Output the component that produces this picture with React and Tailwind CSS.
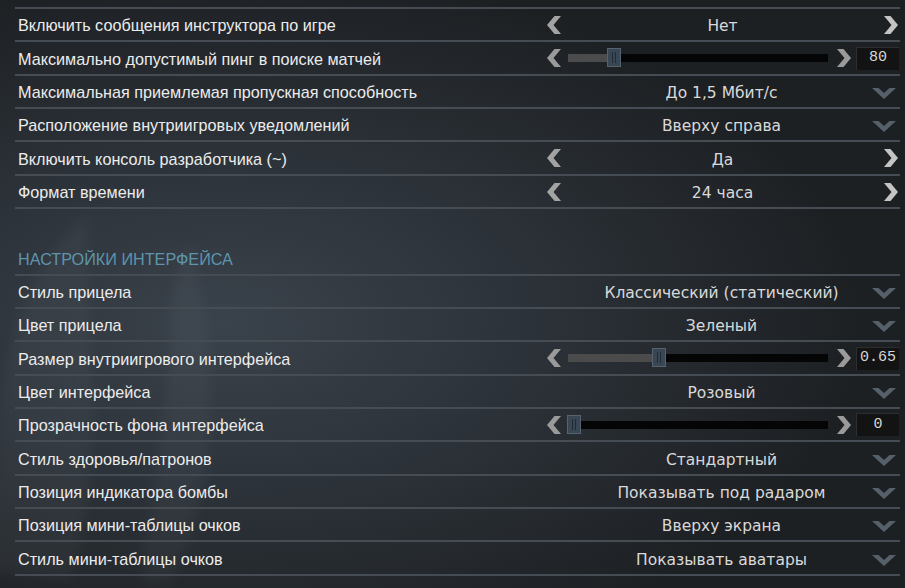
import React from "react";

const top = [
  { label: "Включить сообщения инструктора по игре", type: "select", value: "Нет" },
  { label: "Максимально допустимый пинг в поиске матчей", type: "slider", pct: 15.5, box: "80" },
  { label: "Максимальная приемлемая пропускная способность", type: "drop", value: "До 1,5 Мбит/с" },
  { label: "Расположение внутриигровых уведомлений", type: "drop", value: "Вверху справа" },
  { label: "Включить консоль разработчика (~)", type: "select", value: "Да" },
  { label: "Формат времени", type: "select", value: "24 часа" },
];

const hud = [
  { label: "Стиль прицела", type: "drop", value: "Классический (статический)" },
  { label: "Цвет прицела", type: "drop", value: "Зеленый" },
  { label: "Размер внутриигрового интерфейса", type: "slider", pct: 32.5, box: "0.65" },
  { label: "Цвет интерфейса", type: "drop", value: "Розовый" },
  { label: "Прозрачность фона интерфейса", type: "slider", pct: 0, box: "0" },
  { label: "Стиль здоровья/патронов", type: "drop", value: "Стандартный" },
  { label: "Позиция индикатора бомбы", type: "drop", value: "Показывать под радаром" },
  { label: "Позиция мини-таблицы очков", type: "drop", value: "Вверху экрана" },
  { label: "Стиль мини-таблицы очков", type: "drop", value: "Показывать аватары" },
];

function ArrowLeft({ color = "#a3a3a3" }) {
  return (
    <svg width="14" height="18" viewBox="0 0 14 18">
      <polygon points="14,0 6.5,9 14,18 7.5,18 0,9 7.5,0" fill={color} />
    </svg>
  );
}

function ArrowRight({ color = "#bdbdbd" }) {
  return (
    <svg width="14" height="18" viewBox="0 0 14 18">
      <polygon points="0,0 7.5,9 0,18 6.5,18 14,9 6.5,0" fill={color} />
    </svg>
  );
}

function ChevronDown() {
  return (
    <svg width="24" height="11" viewBox="0 0 24 11">
      <polygon points="0,0 6.5,0 12,5 17.5,0 24,0 12,11" fill="#56606b" />
    </svg>
  );
}

function Control({ row }) {
  if (row.type === "select") {
    return (
      <div className="flex items-center w-full pr-[2px]">
        <ArrowLeft />
        <span className="flex-1 text-center text-[15.5px] text-[#d9d9d9] pt-[5px] font-['DejaVu_Sans',sans-serif]">{row.value}</span>
        <ArrowRight color="#c4c4c4" />
      </div>
    );
  }
  if (row.type === "slider") {
    return (
      <div className="flex items-center w-full">
        <ArrowLeft color="#9a9a9a" />
        <div className="relative ml-[7px] w-[260px] h-[8px] bg-[#050505]">
          <div className="h-full bg-[#4b4b4b]" style={{ width: `${row.pct}%` }} />
          <div
            className="absolute top-[-6px] w-[14px] h-[19px] bg-[#394653] border border-[#56626e] flex justify-center gap-[2px] py-[3px]"
            style={{ left: `calc(${row.pct}% - 1px)` }}
          >
            <div className="w-px bg-[#222b33]" />
            <div className="w-px bg-[#222b33]" />
          </div>
        </div>
        <div className="ml-[9px]">
          <ArrowRight color="#9a9a9a" />
        </div>
        <div className="ml-[5px] w-[43px] h-[23px] bg-[#131313] border-t border-l border-[#2e2e2e] flex items-center justify-center text-[15px] text-[#d6d6d6] font-['Liberation_Mono',monospace]">
          {row.box}
        </div>
      </div>
    );
  }
  return (
    <div className="grid w-full items-center">
      <span className="[grid-area:1/1] text-center text-[15.5px] text-[#d9d9d9] pt-[5px] pr-[4px] font-['DejaVu_Sans',sans-serif]">{row.value}</span>
      <div className="[grid-area:1/1] justify-self-end pr-[4px] pt-[4px] flex">
        <ChevronDown />
      </div>
    </div>
  );
}

function Row({ row, idx }) {
  return (
    <div
      className={`flex items-center border-b-2 border-[#464c53] ${idx % 3 === 1 ? "h-[34px]" : "h-[33px]"}`}
    >
      <div className="w-[532px] pl-[3px] text-[16.2px] text-[#ececec] pt-[2px]">{row.label}</div>
      <div className="flex-1 flex">
        <Control row={row} />
      </div>
    </div>
  );
}

export default function App() {
  return (
    <div className="relative w-[905px] h-[588px] overflow-hidden font-['Liberation_Sans',Arial,sans-serif] bg-[radial-gradient(ellipse_70%_60%_at_25%_55%,#3a424b_0%,#2d333a_45%,#1d2023_100%)]">
      <svg className="absolute left-[-60px] top-[170px] opacity-[0.04] blur-[6px]" width="320" height="420" viewBox="0 0 320 420">
        <path d="M40 400 C60 300 50 200 90 120 C110 80 130 60 150 40 C140 120 160 200 150 300 C148 340 140 380 130 410 Z" fill="#cfd8e0" />
        <path d="M200 410 C210 320 230 240 230 160 C230 120 240 90 250 70 C270 150 280 250 260 330 C250 370 240 395 230 415 Z" fill="#cfd8e0" />
      </svg>
      <div className="relative pl-[15px] pr-[5px]">
        <div className="h-[9px] border-b-2 border-[#464c53]" />
        {top.map((r, i) => (
          <Row key={r.label} row={r} idx={i} />
        ))}
        <div className="h-[33px]" />
        <div className="h-[34px] flex items-center border-b-2 border-[#464c53] pl-[3px] pt-[3px] text-[16.2px] text-[#5e95ad]">
          НАСТРОЙКИ ИНТЕРФЕЙСА
        </div>
        {hud.map((r, i) => (
          <Row key={r.label} row={r} idx={i + 2} />
        ))}
      </div>
    </div>
  );
}
